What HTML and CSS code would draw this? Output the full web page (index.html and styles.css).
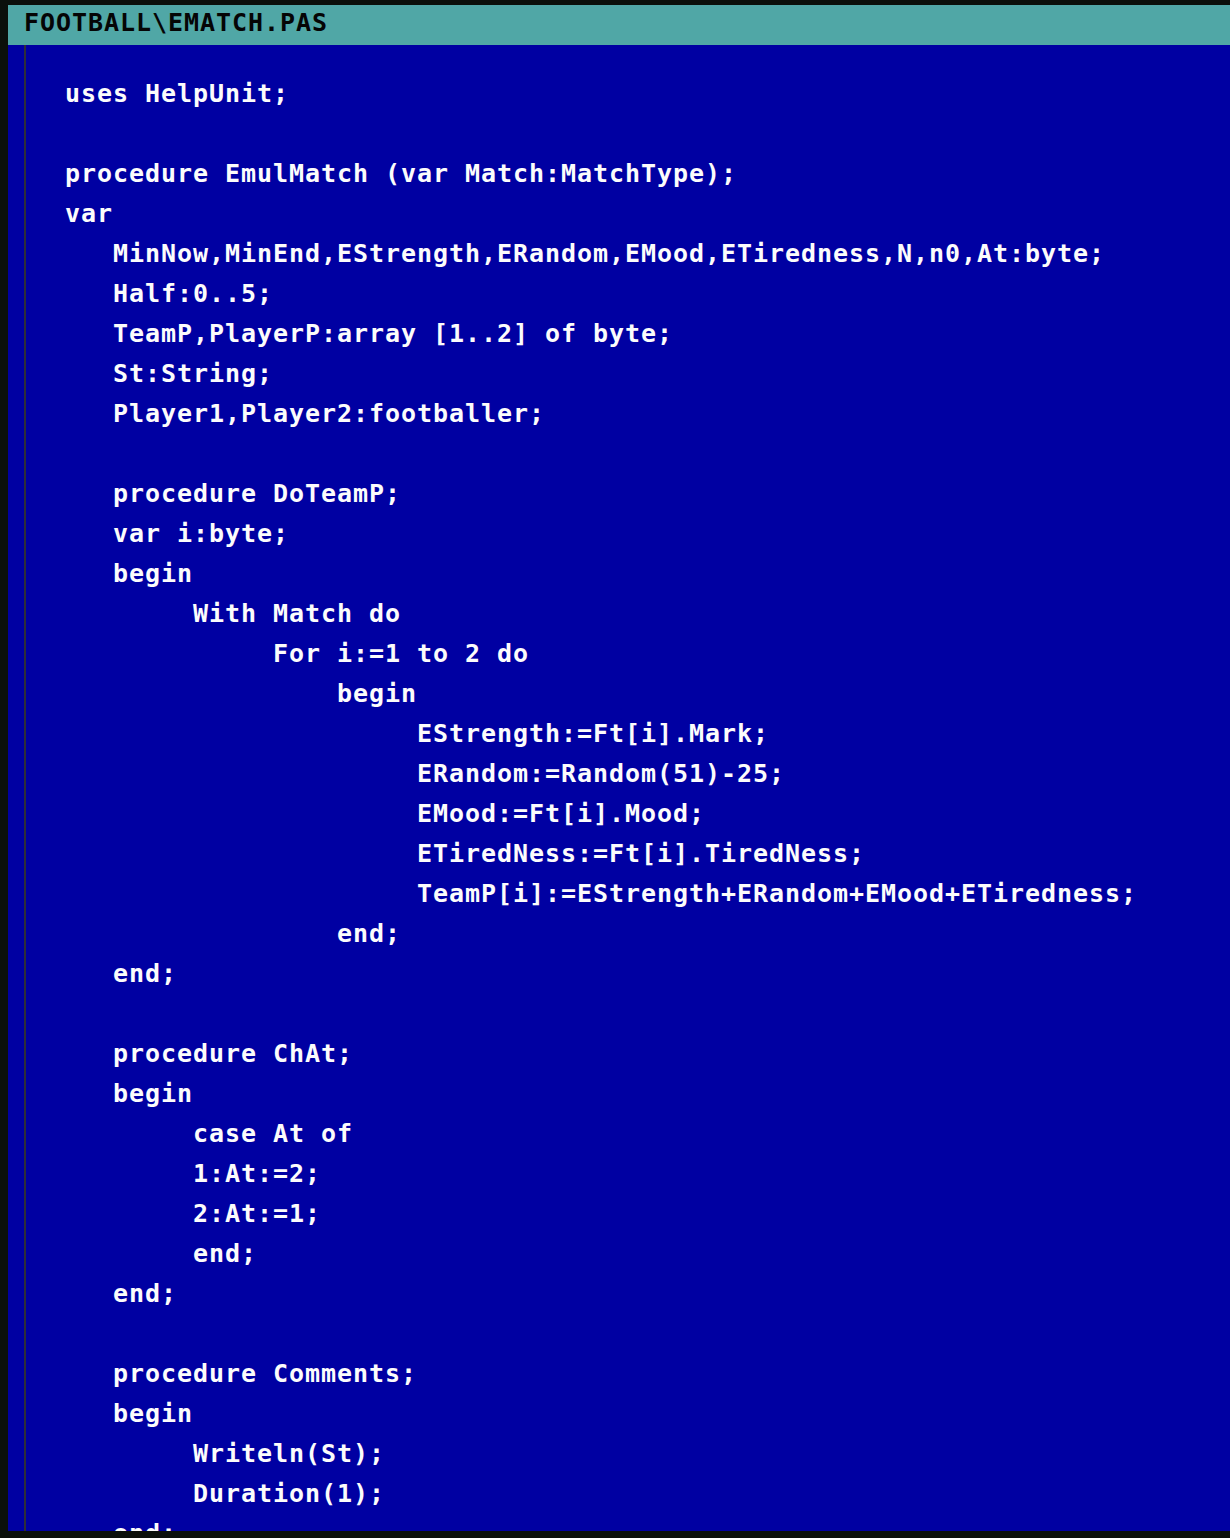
FILE: index.html
```html
<!DOCTYPE html>
<html>
<head>
<meta charset="utf-8">
<link rel="stylesheet" href="styles.css">
</head>
<body>
<div class="window">
  <div class="titlebar">FOOTBALL\EMATCH.PAS</div>
  <div class="editor">
    <div class="gutter">
<pre class="code">uses HelpUnit;

procedure EmulMatch (var Match:MatchType);
var
   MinNow,MinEnd,EStrength,ERandom,EMood,ETiredness,N,n0,At:byte;
   Half:0..5;
   TeamP,PlayerP:array [1..2] of byte;
   St:String;
   Player1,Player2:footballer;

   procedure DoTeamP;
   var i:byte;
   begin
        With Match do
             For i:=1 to 2 do
                 begin
                      EStrength:=Ft[i].Mark;
                      ERandom:=Random(51)-25;
                      EMood:=Ft[i].Mood;
                      ETiredNess:=Ft[i].TiredNess;
                      TeamP[i]:=EStrength+ERandom+EMood+ETiredness;
                 end;
   end;

   procedure ChAt;
   begin
        case At of
        1:At:=2;
        2:At:=1;
        end;
   end;

   procedure Comments;
   begin
        Writeln(St);
        Duration(1);
   end;
</pre>
    </div>
  </div>
</div>
</body>
</html>
```

FILE: styles.css
```css
html, body {
  margin: 0;
  padding: 0;
  background: #0b100b;
  width: 1230px;
  height: 1538px;
  overflow: hidden;
}

.window {
  margin: 5px 0 0 8px;
  width: 1222px;
  font-family: "DejaVu Sans Mono", "Liberation Mono", monospace;
  font-weight: bold;
  font-size: 25px;
  letter-spacing: 0.95px;
}

.titlebar {
  height: 40px;
  box-sizing: border-box;
  background: #50a7a6;
  color: #050505;
  line-height: 36px;
  padding: 0 0 4px 16px;
  white-space: pre;
}

.editor {
  height: 1486px;
  background: #0000a2;
  overflow: hidden;
  padding-left: 16px;
  box-sizing: border-box;
}

.gutter {
  height: 100%;
  border-left: 2px solid #2e2e38;
  padding: 29px 0 0 39px;
  box-sizing: border-box;
}

.code {
  margin: 0;
  font: inherit;
  letter-spacing: inherit;
  line-height: 40px;
  color: #fcfcfc;
}
```
